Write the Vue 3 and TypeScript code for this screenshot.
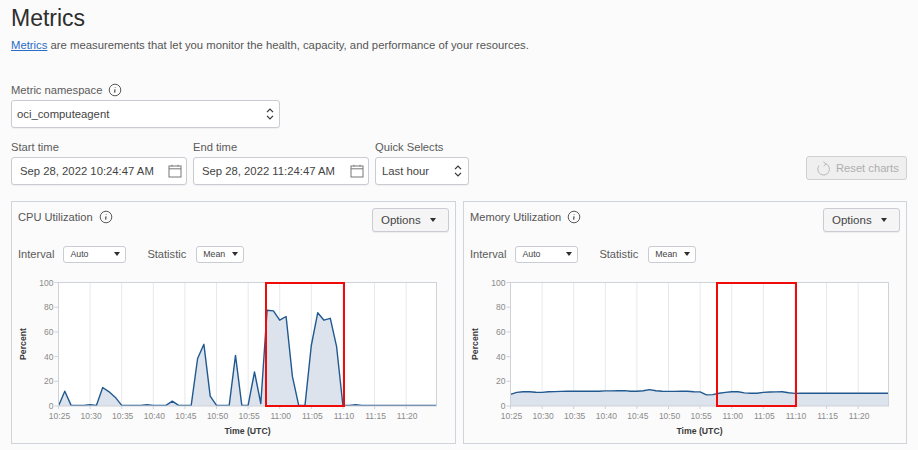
<template>
  <div class="page">
    <h1 class="title">Metrics</h1>
    <p class="desc"><a class="link" href="#">Metrics</a> are measurements that let you monitor the health, capacity, and performance of your resources.</p>

    <div class="field namespace">
      <label class="field-label">Metric namespace
        <svg class="info" viewBox="0 0 14 14"><circle cx="7" cy="7" r="5.8" /><path class="info-i" d="M7.3 4.2v.6M7 6.3l-.4 3.4" /></svg>
      </label>
      <div class="control">
        <span>oci_computeagent</span>
        <svg class="updown" viewBox="0 0 10 14"><path d="M2 5.2 5 2.2l3 3M2 8.8l3 3 3-3" /></svg>
      </div>
    </div>

    <div class="time-row">
      <div v-for="t in times" :key="t.label" class="field time-field">
        <label class="field-label">{{ t.label }}</label>
        <div class="control date">
          <span>{{ t.value }}</span>
          <svg class="calendar" viewBox="0 0 14 14"><rect x="1" y="2" width="12" height="11" /><path d="M1 4.8h12M4 .8v1.6M10 .8v1.6" /></svg>
        </div>
      </div>
      <div class="field quick-field">
        <label class="field-label">Quick Selects</label>
        <div class="control quick">
          <span>Last hour</span>
          <svg class="updown" viewBox="0 0 10 14"><path d="M2 5.2 5 2.2l3 3M2 8.8l3 3 3-3" /></svg>
        </div>
      </div>
      <button class="reset" disabled>
        <svg class="reset-icon" viewBox="0 0 16 16"><path d="M10.4 3A6.2 6.2 0 1 1 3.2 5M7.8 .8l2.8 2.2L8.2 5.6" /></svg>
        Reset charts
      </button>
    </div>

    <div class="charts">
      <section v-for="c in charts" :key="c.title" class="panel">
        <div class="panel-head">
          <h2 class="panel-title">{{ c.title }}
            <svg class="info" viewBox="0 0 14 14"><circle cx="7" cy="7" r="5.8" /><path class="info-i" d="M7.3 4.2v.6M7 6.3l-.4 3.4" /></svg>
          </h2>
          <button class="options">Options <i class="caret"></i></button>
        </div>
        <div class="filters">
          <span class="filter-label">Interval</span>
          <div class="mini auto">Auto <i class="caret"></i></div>
          <span class="filter-label stat">Statistic</span>
          <div class="mini mean">Mean <i class="caret"></i></div>
        </div>
        <svg class="plot" :width="W" :height="H" :viewBox="`0 0 ${W} ${H}`">
          <rect :x="X0" :y="Y0" :width="PW" :height="PH" fill="#fff" />
          <line v-for="t in xTicks" :key="t.label" :x1="xAt(t.min)" :x2="xAt(t.min)" :y1="Y0" :y2="Y0 + PH" class="grid" />
          <path :d="areaPath(c.data)" class="area" />
          <path :d="linePath(c.data)" class="series" />
          <rect :x="X0" :y="Y0" :width="PW" :height="PH" class="frame" />
          <g v-for="v in yTicks" :key="v">
            <line :x1="X0 - 4" :x2="X0" :y1="yAt(v)" :y2="yAt(v)" class="frame-line" />
            <text :x="X0 - 5" :y="yAt(v) + 3" text-anchor="end" class="tick">{{ v }}</text>
          </g>
          <g v-for="t in xTicks" :key="t.label">
            <line :x1="xAt(t.min)" :x2="xAt(t.min)" :y1="Y0 + PH" :y2="Y0 + PH + 3" class="frame-line" />
            <text :x="xAt(t.min) + 1" :y="Y0 + PH + 13" text-anchor="middle" class="tick">{{ t.label }}</text>
          </g>
          <text :x="X0 + 189" y="159" text-anchor="middle" class="axis">Time (UTC)</text>
          <text x="0" y="0" text-anchor="middle" class="axis" transform="translate(14 69) rotate(-90)">Percent</text>
        </svg>
        <div class="highlight" :style="{ left: c.boxLeft + 'px', width: c.boxWidth + 'px' }"></div>
      </section>
    </div>
  </div>
</template>

<script setup lang="ts">
const W = 443
const H = 166
const X0 = 46.5
const Y0 = 7.5
const PW = 378
const PH = 123.5
const END_MIN = 59.8

const times = [
  { label: 'Start time', value: 'Sep 28, 2022 10:24:47 AM' },
  { label: 'End time', value: 'Sep 28, 2022 11:24:47 AM' }
]

const labels = ['10:25', '10:30', '10:35', '10:40', '10:45', '10:50', '10:55', '11:00', '11:05', '11:10', '11:15', '11:20']
const xTicks = labels.map((label, i) => ({ label, min: i * 5 }))
const yTicks = [0, 20, 40, 60, 80, 100]

const xAt = (min: number) => X0 + (min / END_MIN) * PW
const yAt = (v: number) => Y0 + PH - (v / 100) * PH

// one value per minute, the last one is carried to the end of the window
const cpu = [
  0, 12, 0.5, 0.5, 0.5, 1, 0.5, 15, 11.5, 7, 0.5, 0.5, 0.5, 0.5, 1, 0.5, 0.5, 0.5, 4, 0.5, 0.5, 0.5,
  38.5, 50, 8, 0.5, 0.5, 0.5, 41, 0.5, 0.5, 27.5, 2, 77.5, 77, 69.5, 72.5, 24, 0.5, 0.5, 49, 75.5,
  69.5, 71, 48, 0.5, 0.5, 1, 0.5, 0.5, 0.5, 0.5, 0.5, 0.5, 0.5, 0.5, 0.5, 0.5, 0.5, 0.5
]
const memory = [
  9.5, 11, 11.5, 11.5, 11.2, 11, 11.5, 11.7, 11.8, 12, 12, 12, 12, 12, 12, 12.2, 12.2, 12.3, 12.5, 12,
  12, 12.3, 13.3, 12.3, 12, 11.8, 11.8, 11.9, 12, 11.5, 11.4, 9, 9.2, 10.4, 11, 11.5, 11.6, 10.6, 10.3,
  10.3, 11, 11.3, 11.4, 11.5, 10.8, 10.2, 10.3, 10.3, 10.3, 10.3, 10.3, 10.3, 10.3, 10.3, 10.3, 10.3,
  10.3, 10.3, 10.3, 10.3
]

const charts = [
  { title: 'CPU Utilization', data: cpu, boxLeft: 253, boxWidth: 80 },
  { title: 'Memory Utilization', data: memory, boxLeft: 252, boxWidth: 81 }
]

const linePath = (d: number[]) => {
  const pts = d.map((v, i) => `${i ? 'L' : 'M'}${xAt(i).toFixed(1)} ${yAt(v).toFixed(1)}`)
  pts.push(`L${xAt(END_MIN).toFixed(1)} ${yAt(d[d.length - 1]).toFixed(1)}`)
  return pts.join(' ')
}
const areaPath = (d: number[]) =>
  `${linePath(d)} L${xAt(END_MIN).toFixed(1)} ${Y0 + PH} L${X0} ${Y0 + PH} Z`
</script>

<style>
html,
body {
  margin: 0;
  background: #fbfbfb;
}
</style>

<style scoped>
.page {
  width: 918px;
  height: 450px;
  overflow: hidden;
  box-sizing: border-box;
  padding: 4px 11px 0;
  font-family: "Liberation Sans", Arial, sans-serif;
  color: #4c4c4c;
}

.title {
  margin: 0;
  font-size: 23px;
  line-height: 28px;
  font-weight: 400;
  color: #2e2e2e;
}

.desc {
  margin: 6px 0 0;
  font-size: 11.3px;
  line-height: 14px;
  color: #555;
}

.link {
  color: #2b6cc4;
}

.namespace {
  margin-top: 31px;
}

.field-label {
  display: flex;
  align-items: center;
  height: 14px;
  margin-bottom: 3px;
  font-size: 11.2px;
  color: #5a5a5a;
}

.info {
  width: 14px;
  height: 14px;
  margin-left: 6px;
  fill: none;
  stroke: #5a5a5a;
  stroke-width: 1;
}

.info-i {
  stroke-width: 1.3;
}

.control {
  display: flex;
  align-items: center;
  justify-content: space-between;
  box-sizing: border-box;
  height: 28px;
  background: #fff;
  border: 1px solid #c9ccd2;
  border-radius: 3px;
  box-shadow: 0 1px 1px rgba(0, 0, 0, 0.05);
  font-size: 11.3px;
  color: #444;
}

.namespace .control {
  width: 269px;
  padding: 0 4px 0 5px;
}

.updown {
  width: 10px;
  height: 14px;
  fill: none;
  stroke: #333;
  stroke-width: 1.2;
}

.time-row {
  display: flex;
  align-items: flex-end;
  gap: 6px;
  margin-top: 12px;
}

.time-field .control {
  width: 176px;
  padding: 0 4px 0 8px;
}

.calendar {
  width: 14px;
  height: 14px;
  fill: none;
  stroke: #777;
  stroke-width: 1;
}

.quick {
  width: 94px;
  padding: 0 5px 0 6px;
}

.reset {
  display: flex;
  align-items: center;
  gap: 5px;
  box-sizing: border-box;
  width: 101px;
  height: 24px;
  margin: 0 0 5px auto;
  padding: 0 0 0 9px;
  background: #efefef;
  border: 1px solid #d0d0d0;
  border-radius: 3px;
  font-family: inherit;
  font-size: 11.2px;
  color: #aeaeae;
}

.reset-icon {
  width: 15px;
  height: 15px;
  fill: none;
  stroke: #b5b5b5;
  stroke-width: 1;
}

.charts {
  display: grid;
  grid-template-columns: 445px 444px;
  gap: 7px;
  margin-top: 16px;
}

.panel {
  position: relative;
  box-sizing: border-box;
  height: 243px;
  background: #fbfbfb;
  border: 1px solid #cfd3da;
}

.panel-head {
  display: flex;
  justify-content: space-between;
  align-items: flex-start;
  padding: 6px 6px 0 6px;
}

.panel-title {
  display: flex;
  align-items: center;
  margin: 2px 0 0;
  height: 14px;
  font-size: 11.1px;
  font-weight: 400;
  color: #555;
}

.panel-title .info {
  margin-left: 6px;
}

.options {
  display: flex;
  align-items: center;
  gap: 9px;
  box-sizing: border-box;
  width: 77px;
  height: 24px;
  padding: 0 0 0 8px;
  background: #f5f5f5;
  border: 1px solid #c9ccd2;
  border-radius: 3px;
  box-shadow: 0 1px 1px rgba(0, 0, 0, 0.06);
  font-family: inherit;
  font-size: 11.5px;
  color: #444;
}

.caret {
  width: 0;
  height: 0;
  border-left: 3.5px solid transparent;
  border-right: 3.5px solid transparent;
  border-top: 4px solid #2e2e2e;
}

.filters {
  display: flex;
  align-items: center;
  margin-top: 13px;
  padding-left: 6px;
  height: 18px;
}

.filter-label {
  font-size: 11.1px;
  color: #5a5a5a;
}

.stat {
  margin-left: 21px;
}

.mini {
  display: flex;
  align-items: center;
  justify-content: space-between;
  box-sizing: border-box;
  height: 17px;
  margin-left: 9px;
  background: #fff;
  border: 1px solid #c9ccd2;
  border-radius: 3px;
  font-size: 8.8px;
  color: #444;
}

.auto {
  width: 63px;
  padding: 0 5px 0 6px;
}

.mean {
  width: 48px;
  margin-left: 10px;
  padding: 0 5px 0 6px;
}

.plot {
  display: block;
  margin-top: 12px;
}

.grid {
  stroke: #e6e8ec;
  stroke-width: 1;
}

.area {
  fill: #dde3ed;
}

.series {
  fill: none;
  stroke: #20598f;
  stroke-width: 1.4;
  stroke-linejoin: round;
}

.frame {
  fill: none;
  stroke: #ced2d9;
  stroke-width: 1;
}

.frame-line {
  stroke: #ced2d9;
  stroke-width: 1;
}

.tick {
  font-size: 8.5px;
  fill: #8a8a8a;
}

.axis {
  font-size: 8.7px;
  font-weight: 700;
  fill: #3a3a3a;
}

.highlight {
  position: absolute;
  top: 80px;
  height: 125px;
  box-sizing: border-box;
  border: 2px solid #f00b0b;
  pointer-events: none;
}
</style>
